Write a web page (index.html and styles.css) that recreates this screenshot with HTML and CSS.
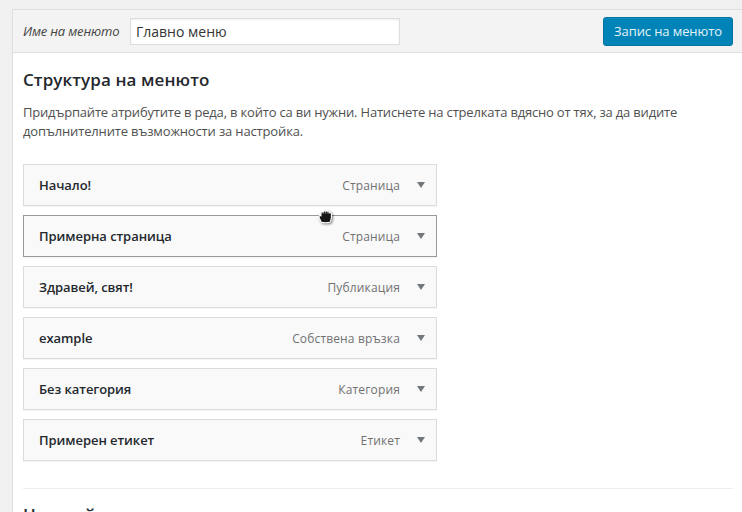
FILE: index.html
```html
<!DOCTYPE html>
<html lang="bg">
<head>
<meta charset="utf-8">
<title>Менюта</title>
<link rel="stylesheet" href="styles.css">
</head>
<body>
<form class="panel">
  <header class="panel-header">
    <label class="name-label" for="menu-name">Име на менюто</label>
    <input class="name-input" id="menu-name" type="text" value="Главно меню">
    <button class="save" type="button">Запис на менюто</button>
  </header>
  <main class="panel-body">
    <h3 class="heading">Структура на менюто</h3>
    <p class="intro">Придърпайте атрибутите в реда, в който са ви нужни. Натиснете на стрелката вдясно от тях, за да видите <span class="intro-end">допълнителните възможности за настройка.</span></p>
    <ul class="items">
      <li class="item"><span class="title">Начало!</span><span class="type">Страница</span><i class="arrow"></i></li>
      <li class="item hovered"><span class="title">Примерна страница</span><span class="type">Страница</span><i class="arrow"></i>
        <svg class="cursor" width="18" height="18" viewBox="0 0 18 18">
          <path d="M4.3 14.2 L2.4 10.2 Q1.3 7.4 3.5 7.4 L4 7.6 V4.6 Q4.8 3 6 4 Q6.6 2.2 8.2 3.2 Q9.4 2 10.6 3.4 Q12.4 2.8 12.6 4.8 Q14.6 4.4 14.4 6.6 V9.6 Q14.2 12 12.9 14.2 Q9 15.2 4.3 14.2Z" fill="#161616" stroke="#fff" stroke-width="1.1"/>
          <path d="M6.2 3.6V5.7M8.7 3.2V5.5M11.1 3.6V5.7" stroke="#ddd" stroke-width=".8"/>
        </svg>
      </li>
      <li class="item"><span class="title">Здравей, свят!</span><span class="type">Публикация</span><i class="arrow"></i></li>
      <li class="item"><span class="title">example</span><span class="type">Собствена връзка</span><i class="arrow"></i></li>
      <li class="item"><span class="title">Без категория</span><span class="type">Категория</span><i class="arrow"></i></li>
      <li class="item"><span class="title">Примерен етикет</span><span class="type">Етикет</span><i class="arrow"></i></li>
    </ul>
    <section class="settings">
      <h3 class="heading">Настройки</h3>
    </section>
  </main>
</form>
</body>
</html>
```
FILE: styles.css
```css
* { box-sizing: border-box; }
html, body { height: 100%; overflow: hidden; }
body {
  margin: 0;
  padding: 9px 0 0 12px;
  background: #f0f0f0;
  color: #444;
  font: 13px/19px "Open Sans", "Noto Sans", sans-serif;
}
.panel {
  height: 503px;
  overflow: hidden;
  border: 1px solid #dedede;
  border-right: 0;
  border-bottom: 0;
  background: #fff;
}
.panel-header {
  display: flex;
  align-items: center;
  height: 43px;
  padding: 0 9px 0 10px;
  border-bottom: 1px solid #dedede;
  background: #f3f3f3;
}
.name-label { width: 107px; font-style: italic; letter-spacing: -.17px; }
.name-input {
  width: 270px;
  height: 27px;
  padding: 2px 5px;
  border: 1px solid #ddd;
  box-shadow: inset 0 1px 2px rgba(0, 0, 0, .07);
  background: #fff;
  color: #333;
  font: 14px/19px "Open Sans", "Noto Sans", sans-serif;
}
.save {
  width: 130px;
  height: 29px;
  margin-left: auto;
  padding: 0;
  border: 1px solid #0074a2;
  border-radius: 3px;
  background: #0083b6;
  box-shadow: inset 0 1px 0 rgba(120, 200, 230, .15);
  color: #e4f3fa;
  font: 13px/26px "Open Sans", "Noto Sans", sans-serif;
  letter-spacing: -.1px;
}
.panel-body { padding: 17px 9px 0 10px; }
.heading {
  margin: 0;
  color: #23282d;
  font-size: 17px;
  line-height: 20px;
  font-weight: 600;
  letter-spacing: .1px;
}
.intro { margin: 13px 0 0; color: #505050; letter-spacing: -.19px; }
.intro-end { letter-spacing: -.15px; }
.items { width: 414px; margin: 23px 0 0; padding: 0; list-style: none; }
.item {
  position: relative;
  display: flex;
  align-items: center;
  height: 42px;
  margin-bottom: 9px;
  padding: 0 11px 0 15px;
  border: 1px solid #dcdcdc;
  background: #f9f9f9;
  box-shadow: 0 1px 1px rgba(0, 0, 0, .04);
}
.hovered { border-color: #999; }
.title { color: #23282d; font-weight: 600; letter-spacing: -.06px; }
.type { margin-left: auto; color: #727272; font-size: 12px; letter-spacing: .15px; }
.arrow {
  margin-left: 17px;
  border: 4px solid transparent;
  border-top: 6px solid #72777c;
  border-bottom: 0;
}
.cursor {
  position: absolute;
  left: 293px;
  top: -8px;
  filter: drop-shadow(1px 1px 1px rgba(0, 0, 0, .5));
}
.settings { margin-top: 27px; padding-top: 16px; border-top: 1px solid #eee; }
```
